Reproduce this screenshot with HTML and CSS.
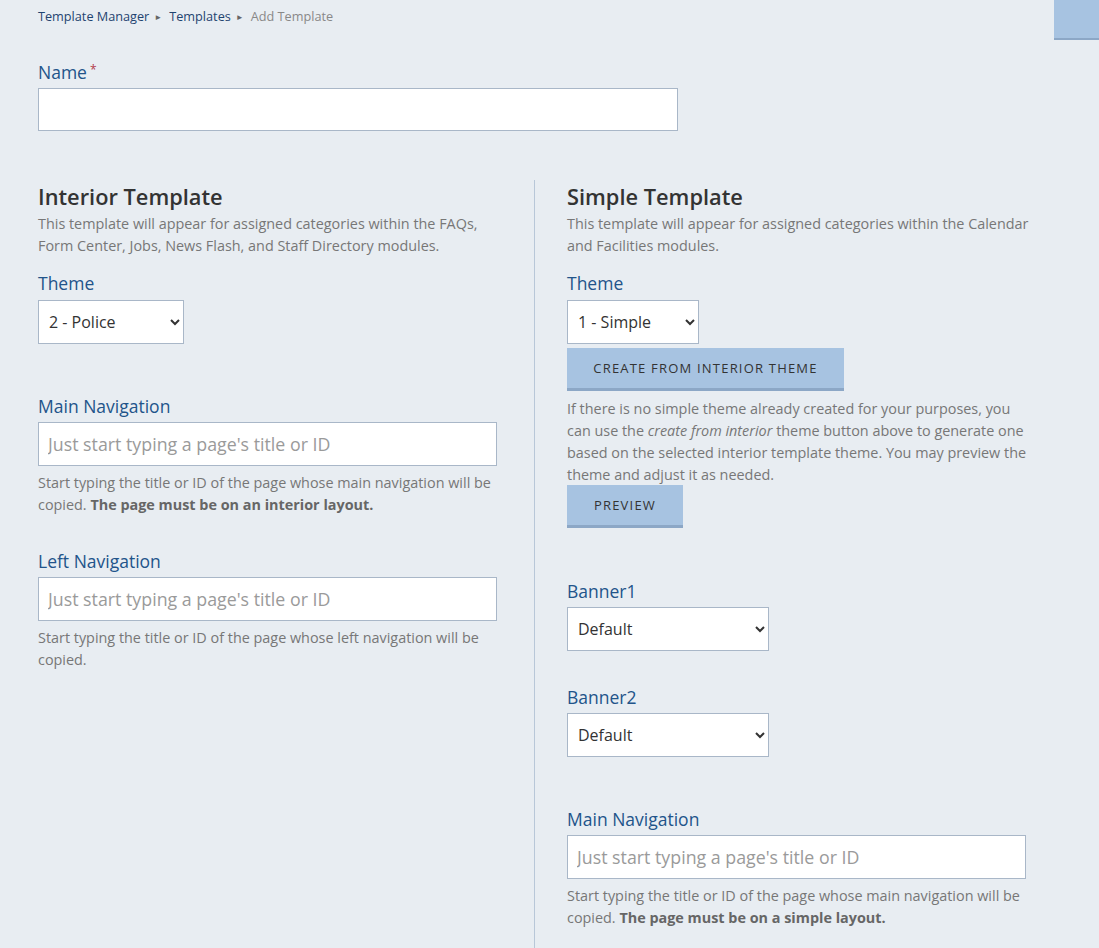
FILE: index.html
```
<!DOCTYPE html>
<html lang="en">
<head>
    <meta charset="UTF-8">
    <meta name="viewport" content="width=device-width, initial-scale=1.0">
    <title>Add Template</title>
    <link rel="stylesheet" href="styles.css">
</head>
<body>

<div class="corner-tab"></div>

<div class="page">
    <!-- Breadcrumb -->
    <div class="breadcrumb">
        <a href="#">Template Manager</a><span class="crumb-sep">&#9658;</span><a href="#">Templates</a><span class="crumb-sep">&#9658;</span><span class="crumb-current">Add Template</span>
    </div>

    <!-- Name -->
    <div class="name-field">
        <label class="field-label" for="nameInput">Name<span class="required">*</span></label>
        <input type="text" id="nameInput" class="text-input name-input">
    </div>

    <div class="columns">
        <!-- Interior Template -->
        <div class="column column-left">
            <h2>Interior Template</h2>
            <p class="intro">This template will appear for assigned categories within the FAQs, Form Center, Jobs, News Flash, and Staff Directory modules.</p>

            <label class="field-label theme-label">Theme</label>
            <select class="select theme-select-left">
                <option>2 - Police</option>
            </select>

            <label class="field-label spaced">Main Navigation</label>
            <input type="text" class="text-input nav-input" placeholder="Just start typing a page's title or ID">
            <p class="help">Start typing the title or ID of the page whose main navigation will be copied. <strong>The page must be on an interior layout.</strong></p>

            <label class="field-label">Left Navigation</label>
            <input type="text" class="text-input nav-input" placeholder="Just start typing a page's title or ID">
            <p class="help">Start typing the title or ID of the page whose left navigation will be copied.</p>
        </div>

        <!-- Simple Template -->
        <div class="column column-right">
            <h2>Simple Template</h2>
            <p class="intro">This template will appear for assigned categories within the Calendar and Facilities modules.</p>

            <label class="field-label theme-label">Theme</label>
            <select class="select theme-select-right">
                <option>1 - Simple</option>
            </select>
            <button class="btn btn-create">Create from interior theme</button>
            <p class="help info">If there is no simple theme already created for your purposes, you can use the <em>create from interior</em> theme button above to generate one based on the selected interior template theme. You may preview the theme and adjust it as needed.</p>
            <button class="btn btn-preview">Preview</button>

            <label class="field-label spaced">Banner1</label>
            <select class="select banner-select">
                <option>Default</option>
            </select>

            <label class="field-label">Banner2</label>
            <select class="select banner-select">
                <option>Default</option>
            </select>

            <label class="field-label spaced">Main Navigation</label>
            <input type="text" class="text-input nav-input" placeholder="Just start typing a page's title or ID">
            <p class="help">Start typing the title or ID of the page whose main navigation will be copied. <strong>The page must be on a simple layout.</strong></p>
        </div>
    </div>
</div>

</body>
</html>
```

FILE: styles.css
```
body {
    margin: 0;
    background: #e8edf2;
    font-family: "Open Sans", Arial, sans-serif;
    color: #333;
}
.page {
    padding: 6px 38px 0;
}
.corner-tab {
    position: absolute;
    top: 0;
    right: 0;
    width: 45px;
    height: 38px;
    background: #a7c3e1;
    border-bottom: 2px solid #8ca7c6;
}
.breadcrumb {
    height: 20px;
    font-size: 12.7px;
    line-height: 20px;
}
.breadcrumb a {
    color: #1f4470;
    text-decoration: none;
}
.crumb-sep {
    font-size: 8px;
    line-height: 1;
    color: #666;
    margin: 0 7px 0 5px;
    vertical-align: 1px;
}
.crumb-current {
    color: #888;
}
.field-label {
    display: block;
    font-size: 17.5px;
    line-height: 22px;
    color: #22548a;
    margin: 35px 0 5px;
}
.field-label.spaced {
    margin-top: 51px;
}
.required {
    color: #b33a4a;
    font-size: 12px;
    line-height: 1;
    margin-left: 3px;
    vertical-align: 5px;
}
.text-input {
    display: block;
    box-sizing: border-box;
    height: 44px;
    padding: 0 9px;
    background: #fff;
    border: 1px solid #a9b7c8;
    border-radius: 0;
    font-family: inherit;
    font-size: 17.8px;
    color: #333;
}
.text-input::placeholder {
    color: #9a9a9a;
}
.name-input {
    width: 640px;
    height: 43px;
}
.nav-input {
    width: 459px;
}
.columns {
    display: grid;
    grid-template-columns: 496px 1fr;
    margin-top: 49px;
}
.column {
    padding-top: 3px;
}
.column-left {
    padding-right: 37px;
}
.column-right {
    border-left: 1px solid #b8c7d8;
    padding-left: 32px;
    width: 466px;
    padding-bottom: 40px;
}
h2 {
    margin: 0;
    font-size: 21.8px;
    line-height: 28px;
    font-weight: 600;
    color: #333;
}
.intro, .help {
    margin: 0;
    font-size: 14.4px;
    line-height: 21.6px;
    color: #777;
}
.intro {
    margin-top: 2px;
}
.help {
    margin-top: 6px;
}
.help strong {
    color: #666;
}
.help.info {
    margin-top: 7px;
    line-height: 21.8px;
}
.field-label.theme-label {
    margin-top: 16px;
    margin-bottom: 6px;
}
.select {
    display: block;
    height: 44px;
    padding: 0 6px;
    background: #fff;
    border: 1px solid #a9b7c8;
    border-radius: 0;
    font-family: inherit;
    font-size: 16px;
    color: #333;
}
.theme-select-left {
    width: 146px;
}
.theme-select-right {
    width: 132px;
}
.banner-select {
    width: 202px;
}
.btn {
    display: block;
    height: 43px;
    padding: 0 25px;
    background: #a7c3e1;
    border: none;
    border-bottom: 3px solid #8ca7c6;
    font-family: inherit;
    font-size: 13px;
    letter-spacing: 1.2px;
    text-transform: uppercase;
    color: #333;
    cursor: pointer;
}
.btn:hover {
    background: #97b6d8;
}
.btn-create {
    margin-top: 4px;
    width: 277px;
}
.btn-preview {
    width: 116px;
}
.btn-preview + .field-label.spaced {
    margin-top: 52px;
}
```
